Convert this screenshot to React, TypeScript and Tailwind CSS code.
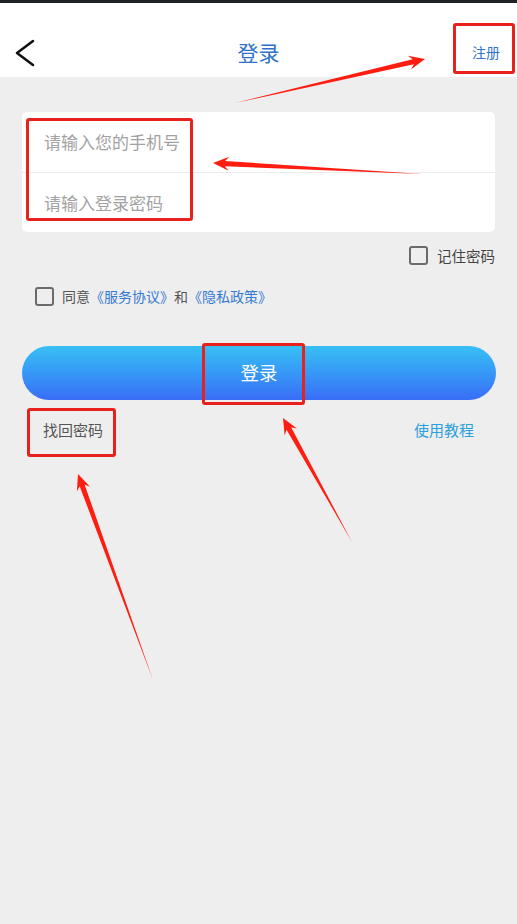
const font = { fontFamily: '"Noto Sans CJK SC", "Noto Sans", sans-serif' };

type Pt = [number, number];

// tapered annotation arrow: thin tail, widening shaft, filled head at `tip`
function arrowPoints(tail: Pt, tip: Pt) {
  const dx = tip[0] - tail[0];
  const dy = tip[1] - tail[1];
  const len = Math.hypot(dx, dy);
  const ux = dx / len;
  const uy = dy / len;
  const nx = -uy;
  const ny = ux;
  const headLen = 16;
  const headW = 7;
  const shaftW = 2.6;
  const bx = tip[0] - ux * headLen;
  const by = tip[1] - uy * headLen;
  const bx2 = tip[0] - ux * (headLen - 4);
  const by2 = tip[1] - uy * (headLen - 4);
  const pts: Pt[] = [
    tail,
    [bx2 + nx * shaftW, by2 + ny * shaftW],
    [bx + nx * headW, by + ny * headW],
    tip,
    [bx - nx * headW, by - ny * headW],
    [bx2 - nx * shaftW, by2 - ny * shaftW],
  ];
  return pts.map((p) => p.join(",")).join(" ");
}

const arrows: [Pt, Pt][] = [
  [[235, 103], [425, 59]],
  [[422, 174], [213, 163]],
  [[352, 542], [283, 418]],
  [[153, 680], [78, 474]],
];

const boxes = [
  "left-[453px] top-[23px] w-[62px] h-[51px]",
  "left-[26px] top-[118px] w-[167px] h-[103px]",
  "left-[202px] top-[343px] w-[103px] h-[62px]",
  "left-[27px] top-[408px] w-[89px] h-[49px]",
];

function Checkbox() {
  return <span className="block w-[19px] h-[19px] rounded-[3px] border-2 border-[#6b6b6b]" />;
}

export default function App() {
  return (
    <div className="relative w-[517px] h-[924px] overflow-hidden bg-[#efeeee]" style={font}>
      <div className="h-[3px] bg-[#1e2128]" />
      <header className="flex h-[74px] items-center bg-white pt-[25px]">
        <div className="w-[60px] pl-[14px]">
          <svg width="22" height="28" viewBox="0 0 22 28">
            <polyline points="19,2 3,14 19,26" fill="none" stroke="#111" strokeWidth="2.6" strokeLinecap="round" strokeLinejoin="round" />
          </svg>
        </div>
        <h1 className="flex-1 text-center text-[21px] text-[#2f72c8]">登录</h1>
        <div className="w-[60px] pr-[17px] text-right text-[14px] text-[#2f72c8]">注册</div>
      </header>

      <div className="mx-[22px] mt-[35px] rounded-[5px] bg-white">
        <div className="flex h-[60px] items-center pl-[22px] text-[17px] text-[#a2a2a2]">请输入您的手机号</div>
        <div className="h-[1px] bg-[#ebebeb]" />
        <div className="flex h-[59px] items-center pl-[22px] text-[17px] text-[#a2a2a2]">请输入登录密码</div>
      </div>

      <div className="mt-[13px] flex items-center justify-end gap-[9px] pr-[22px] text-[14.5px] text-[#444]">
        <Checkbox />
        <span>记住密码</span>
      </div>

      <div className="mt-[19px] flex items-center gap-[8px] pl-[35px] text-[14px] text-[#555]">
        <Checkbox />
        <span>
          同意<span className="text-[#3479d2]">《服务协议》</span>和<span className="text-[#3479d2]">《隐私政策》</span>
        </span>
      </div>

      <button className="mx-[22px] mt-[39px] flex h-[54px] w-[474px] items-center justify-center rounded-full bg-gradient-to-b from-[#38c0f4] to-[#3a6cf6] text-[18.5px] text-white">
        登录
      </button>

      <div className="mt-[19px] flex items-center justify-between px-[43px] text-[15px]">
        <span className="text-[#555]">找回密码</span>
        <span className="text-[#2aa0dd]">使用教程</span>
      </div>

      {boxes.map((b) => (
        <div key={b} className={`absolute rounded-[3px] border-[3px] border-[#e8211d] ${b}`} />
      ))}

      <svg className="pointer-events-none absolute left-0 top-0" width="517" height="924">
        {arrows.map(([tail, tip], i) => (
          <polygon key={i} points={arrowPoints(tail, tip)} fill="#ff1c10" />
        ))}
      </svg>
    </div>
  );
}
